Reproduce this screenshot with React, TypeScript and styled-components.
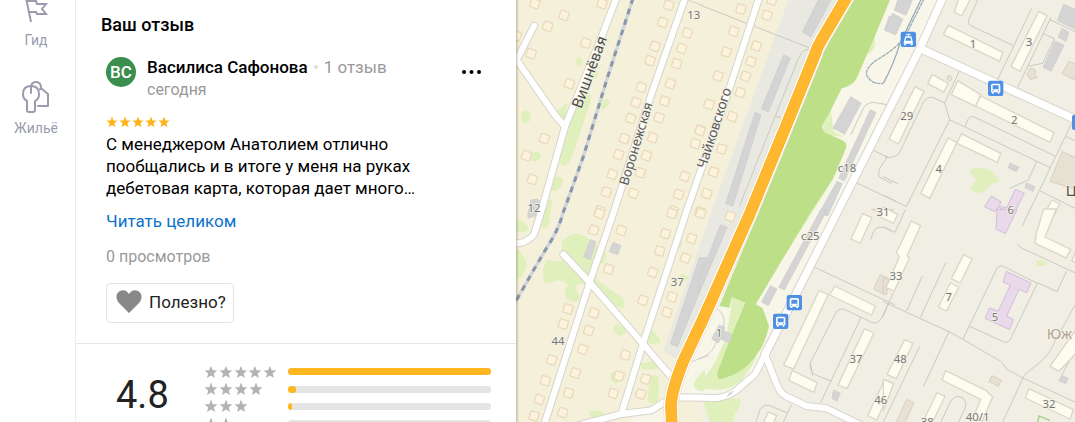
import React from "react";
import styled, { createGlobalStyle, css } from "styled-components";

const GlobalStyle = createGlobalStyle`
  * { box-sizing: border-box; }
  body {
    margin: 0;
    background: #fff;
    color: #000;
    font-family: Roboto, "Noto Sans", sans-serif;
    font-size: 17px;
    line-height: 22px;
  }
`;

const Shell = styled.div`
  display: flex;
  height: 100vh;
  overflow: hidden;
`;

const SideNav = styled.nav`
  flex: 0 0 76px;
  display: flex;
  flex-direction: column;
  gap: 31px;
  border-right: 1px solid #ededf0;
`;

const NavLink = styled.a`
  display: flex;
  flex-direction: column;
  align-items: center;
  gap: 5px;
  padding-right: 3px;
  color: #9a9cad;
  font-size: 14px;
  line-height: 18px;
  text-decoration: none;
`;

const Panel = styled.main`
  flex: 0 0 440px;
  background: #fff;
`;

const ReviewSection = styled.section`
  padding: 14px 30px 20px;
  border-bottom: 1px solid #e6e6e6;
`;

const SectionTitle = styled.h2`
  margin: 0 0 20px -5px;
  font-size: 18px;
  line-height: 22px;
  font-weight: 500;
`;

const AuthorRow = styled.header`
  display: flex;
  gap: 11px;
`;

const Avatar = styled.div`
  display: flex;
  align-items: center;
  justify-content: center;
  width: 30px;
  height: 30px;
  margin-top: 1px;
  border-radius: 50%;
  background: #3a8e4e;
  color: #fff;
  font-size: 17px;
  font-weight: 500;
`;

const AuthorInfo = styled.div`
  flex: 1;
`;

const AuthorLine = styled.div`
  display: flex;
  align-items: center;
  gap: 6px;
`;

const AuthorName = styled.span`
  font-weight: 500;
`;

const Dot = styled.span`
  width: 4px;
  height: 4px;
  border-radius: 50%;
  background: #dedede;
`;

const Muted = styled.span<{ $small?: boolean }>`
  color: #999;
  ${(p) => p.$small && css`font-size: 16px;`}
`;

const MenuButton = styled.button`
  display: flex;
  align-items: center;
  width: 25px;
  height: 32px;
  padding: 0;
  border: 0;
  background: none;
`;

const Stars = styled.div<{ $tone: "gold" | "grey" }>`
  display: flex;
  align-items: center;
  gap: 1px;
  color: ${(p) => (p.$tone === "gold" ? "#ffb31a" : "#b3b3b3")};
`;

const ReviewStars = styled(Stars)`
  margin: 15px 0 5px;
`;

const ReviewText = styled.p`
  max-width: 330px;
  margin: 0 0 11px;
`;

const ReadMore = styled.a`
  display: block;
  color: #0b73cc;
  text-decoration: none;
`;

const Views = styled.div`
  margin: 14px 0 15px;
  color: #999;
  font-size: 16px;
`;

const UsefulButton = styled.button`
  display: flex;
  align-items: center;
  gap: 7px;
  height: 40px;
  padding: 0 7px 2px 9px;
  border: 1px solid #e3e3e3;
  border-radius: 4px;
  background: #fff;
  color: #222;
  font: inherit;
`;

const RatingSection = styled.section`
  display: flex;
  padding: 19px 25px 20px 40px;
`;

const Score = styled.div`
  flex: 0 0 88px;
  padding-top: 7px;
  color: #222;
  font-size: 38px;
  line-height: 50px;
`;

const Distribution = styled.div`
  flex: 1;
  display: grid;
  grid-template-rows: repeat(5, 1fr);
  height: 87px;
`;

const DistributionRow = styled.div`
  display: grid;
  grid-template-columns: 73px 1fr;
  gap: 11px;
  align-items: center;
`;

const Track = styled.div`
  height: 7px;
  border-radius: 3px;
  background: #e5e5e5;
  overflow: hidden;
`;

const Fill = styled.div`
  height: 100%;
  border-radius: 3px;
  background: #ffb61f;
`;

const MapArea = styled.section`
  position: relative;
  flex: 1;
  min-width: 0;
  background: #f1efe3;

  svg {
    display: block;
    width: 100%;
    height: 100%;
  }

  &::before {
    content: "";
    position: absolute;
    inset: 0 auto 0 0;
    width: 3px;
    background: linear-gradient(to right, rgba(70, 60, 20, 0.28), rgba(70, 60, 20, 0));
  }
`;

const Star = ({ size }: { size: number }) => (
  <svg width={size} height={size} viewBox="0 0 24 24" fill="currentColor" aria-hidden="true">
    <path d="M12 1l3 7.800 8 .4-6.200 5.200 2.100 8L12 18l-6.900 4.400 2.100-8L1 9.200l8-.4z" />
  </svg>
);

const StarRow = ({ count, size }: { count: number; size: number }) => (
  <>
    {Array.from({ length: count }, (_, i) => (
      <Star key={i} size={size} />
    ))}
  </>
);

type Points = string[];

interface District {
  x: number;
  y: number;
  houses?: [number, number][];
  grey?: Points;
  blocks?: Points;
  beige?: Points;
  schools?: Points;
  paths?: string[];
  labels?: [number, number, string][];
}

const districts: District[] = [
  {
    x: 0, y: 0,
    houses: [[60,11],[147,46],[98,79],[4,108],[48,161],[261,11],[212,129],[163,251],[88,416],[34,467],[52,538],[461,16],[443,67],[420,139],[405,182],[379,262],[363,307],[347,355],[328,416],[311,464],[292,523],[274,576],[255,633],[517,99],[500,145],[485,191],[466,251],[449,303],[432,353],[413,413],[394,467],[376,518],[355,580],[555,390],[541,431],[509,529],[491,583],[475,633]],
    grey: ["48,600 68,597 78,610 70,645 40,655 38,645"],
    labels: [[536,56,"13"],[57,636,"12"]],
  },
  {
    x: 555, y: 0,
    houses: [[123,27],[216,0],[201,46],[101,94],[79,156],[54,228],[27,313],[0,392],[169,138],[153,184],[137,229],[121,277],[97,350],[65,447],[41,516],[20,581]],
    grey: ["359,-8 397,-8 333,111 307,96","251,165 271,174 205,336 184,326","165,337 183,344 99,618 77,611","452,290 484,309 434,403 399,384","511,329 528,337 433,543 416,535","411,544 427,551 383,648 357,640","568,48 585,55 585,100 553,90"],
    paths: ["M0 15 L337 147 L315 150 Q302 156 294 178 L225 350 L118 620","M225 347 L251 357","M452 405 L489 327 Q497 309 520 307 L562 314","M517 450 L570 474","M467 547 L590 606","M560 475 Q530 510 537 530 L575 550"],
    labels: [[441,516,"с18"]],
  },
  {
    x: 1110, y: 0,
    grey: ["40,-5 84,-5 63,46 28,31","23,40 54,57 32,105 0,91","531,85 552,96 543,124 519,112","509,123 537,135 499,214 474,202","536,12 575,30 575,90 517,62","375,489 402,502 394,515 370,504","424,549 450,560 444,574 420,563"],
    blocks: ["222,-6 258,-6 230,48 208,36","190,76 354,157 344,184 175,103","461,34 486,47 405,214 378,199","142,223 190,250 176,276 128,250","218,242 287,284 272,319 199,284","287,288 507,398 495,427 272,318","90,260 117,274 40,432 12,417","189,414 216,428 134,595 107,580","229,401 348,460 337,487 216,430","500,600 524,612 505,650 480,640"],
    beige: ["552,184 585,196 585,248 531,221","531,455 580,475 580,570 495,545","437,203 452,210 450,224 456,233 435,238 426,224","187,229 195,226 202,234 196,243 187,240"],
    schools: ["319,588 348,605 343,618 365,623 391,568 418,579 382,650 354,640 358,630 340,622 330,635 298,620"],
    paths: ["M280 -5 L251 60 Q248 73 260 78 L385 137","M335 245 L440 25","M397 265 L498 52","M475 101 L508 116 L473 190 L430 198","M493 58 L585 102","M223 213 L179 309 L194 359 L64 620","M179 309 L145 293 Q125 289 115 307 L45 455 Q33 476 0 472","M194 359 L498 504","M239 381 L250 356 Q256 346 270 352 L512 469","M455 485 L430 540 L374 565","M560 370 L430 640","M543 410 L580 426","M-5 530 L40 552","M-5 585 L64 620","M464 572 L570 625"],
    labels: [[264,143,"1"],[432,137,"3"],[65,360,"29"],[388,371,"2"],[161,519,"4"],[377,642,"6"]],
  },
  {
    x: 0, y: 633,
    houses: [[253,7],[236,57],[319,58],[281,174],[159,294],[145,339],[237,306],[221,359],[203,415],[110,447],[181,486],[91,509],[161,546],[73,565],[57,615],[143,605],[471,7],[555,3],[451,68],[434,120],[413,184],[384,268],[530,83],[511,141],[471,258],[456,304],[331,432],[312,495],[295,547],[392,504],[377,549]],
    grey: ["226,86 243,92 226,146 206,138","294,94 318,103 308,131 283,122","553,140 580,140 580,180 487,407 466,399"],
    labels: [[487,224,"37"],[129,403,"44"]],
  },
  {
    x: 555, y: 633,
    houses: [[91,16],[2,7]],
    grey: ["362,-4 382,-4 253,237 236,229","211,224 231,234 205,284 185,273","57,342 74,348 72,359 96,370 90,396 62,384 55,396 35,384","61,41 82,49 -3,245 -3,210","400,537 421,546 411,571 396,562"],
    blocks: ["488,8 516,20 480,97 453,84","404,225 526,285 515,312 389,252","357,239 385,250 281,474 251,463","277,478 351,515 342,544 266,508","493,353 522,366 441,533 414,522","554,506 580,518 530,627 503,614","205,603 230,614 214,650 188,640","515,-5 580,-5 572,18"],
    beige: ["540,191 573,205 556,252 521,234"],
    paths: ["M340 167 L585 282","M362 575 L484 318","M338 495 L331 455 L405 310 Q414 292 432 294 L515 334 Q530 341 544 323 L580 245","M331 455 Q327 485 350 493 L392 510","M512 86 L519 65 Q528 45 550 49 L575 60","M165 640 L180 596 Q190 580 207 583 L262 606","M275 580 L247 640","M380 606 L388 590"],
    labels: [[331,87,"с25"],[57,379,"1"],[468,457,"37"],[542,579,"46"]],
  },
  {
    x: 1110, y: 633,
    grey: ["531,493 550,503 542,518 521,509"],
    blocks: ["-5,-12 38,10 26,37 -20,15","79,30 107,44 66,134 73,142 28,240 3,230 43,137 34,126","236,131 261,144 226,216 199,203","196,216 221,228 185,300 160,288","476,-6 514,-6 480,78 557,115 544,141 450,97 454,68","59,386 84,397 34,503 6,490","-5,505 26,518 -5,600","182,479 302,538 323,558 285,646 254,646 287,565 171,507","156,545 180,556 137,645 108,645","432,533 565,596 555,624 421,561","570,360 580,360 580,420 522,481 495,466","573,118 580,120 580,158 560,150"],
    beige: ["321,494 349,507 340,526 312,512","65,565 87,575 54,648 27,648","-5,198 10,205 5,250 -5,250"],
    schools: ["336,-4 396,-4 361,68 333,54","364,181 438,216 425,245 402,235 365,315 385,326 374,356 300,322 313,291 340,300 376,222 354,213"],
    paths: ["M-5 47 L30 64 L61 -4","M-5 272 L192 362 L232 384 L345 450 Q350 452 365 475 L414 501 L580 578","M112 195 L65 300","M182 156 L106 319","M192 362 L115 527","M104 406 L-5 633","M12 275 L-5 315","M234 384 L332 180 Q340 162 353 165 L457 217 L376 385 Q370 397 355 392 L252 345","M397 98 Q405 112 425 118 L580 190","M545 180 L516 242 L457 215","M580 265 L510 390 Q500 420 470 450 L430 482 Q418 490 414 501 L350 640","M435 -5 L412 45","M530 493 L580 400","M165 640 L195 574 Q210 548 232 560 Q248 575 240 592 L218 640"],
    labels: [[33,206,"33"],[191,270,"7"],[330,330,"5"],[46,457,"48"],[492,591,"32"],[127,646,"38"],[278,630,"40/1"],[-6,16,"31"]],
  },
];

const roads = [
  "M57 78 L5 180 L120 345 L150 380",
  "M305 -8 L260 110 L150 380 L77 640 L57 703 Q53 712 25 727 L-10 732",
  "M511 -8 L410 280 L295 640 L228 835 L88 1272",
  "M733 -8 L645 260 L515 633 L385 1028 L320 1238",
  "M145 763 L225 848 L385 1033 L482 1146",
  "M190 1276 L315 1243 L410 1231 L465 1195 L490 1192 L605 1194 Q640 1190 665 1170 L720 1123 L750 1063",
  "M750 1063 L785 1153 Q795 1178 812 1188 L875 1218 L935 1225 L1040 1276",
];

const mainRoads = [
  "M1284 -8 L1215 145 L965 640 L835 898 L750 1063",
  "M1215 145 L1440 248 L1690 362",
];

const avenue = "M995 -8 L918 122 Q906 142 898 168 L810 385 L705 640 L565 955 L505 1083 Q468 1175 468 1220 L471 1280";

const railway = "M354 -5L275 240L205 470L142 645Q130 690 100 735L60 803L0 908";

const meadows = [
  "M195 270 Q225 260 228 300 L185 430 Q165 505 140 495 Q130 480 140 450 Z",
  "M120 335 L158 308 L152 350 L138 358 Z",
  "M184 175 Q200 167 204 185 Q202 200 187 197 Q178 188 184 175Z",
  "M230 205 Q252 210 251 226 L228 242Z",
  "M262 302 Q280 292 286 308 Q272 330 258 325Z",
  "M20 335 Q36 322 47 347 Q46 370 28 370 Q14 355 20 335Z",
  "M52 458 Q74 448 78 470 Q70 490 48 482Z",
  "M115 535 Q140 520 145 545 Q130 580 110 572Z",
  "M95 600 L112 598 Q105 650 100 680 Q85 695 78 675Z",
  "M3 655 Q35 665 42 690 Q15 700 3 692Z M3 745 Q35 770 35 800 Q20 838 3 840Z",
  "M140 725 Q175 685 215 713 L250 740 Q285 755 268 785 Q240 800 245 840 L310 885 Q340 905 325 925 Q300 925 245 865 Q205 840 178 860 Q205 895 185 905 Q145 905 150 870 L160 855 Q140 835 115 845 L90 850 Q75 815 95 780 L140 785Z",
  "M295 985 Q300 960 335 990 Q325 1020 300 1000Z",
  "M400 985 Q440 1010 435 1030 L400 1032Z",
  "M375 1090 Q410 1090 415 1070 Q450 1080 450 1100 Q400 1115 378 1105Z",
  "M288 1118 Q300 1110 314 1118 L310 1150 Q290 1150 285 1130Z",
  "M405 1130 Q430 1115 432 1145 L430 1205 Q405 1215 397 1200Z",
  "M222 1235 Q250 1225 275 1245 L230 1262Z",
  "M492 720 L502 728 L497 745 L485 740Z M495 825 Q515 820 520 835 Q505 850 495 840Z",
  "M650 891 L692 908 L645 1020 L610 1120 L730 1060 Q690 1150 640 1165 Q590 1175 550 1160 L550 1150 Q600 1100 612 1060 Q642 1010 650 891Z",
  "M570 1110 Q550 1120 535 1155 Q545 1180 570 1170Z",
  "M565 1203 L675 1195 Q680 1215 660 1240 L655 1270 L585 1270Z",
  "M1080 85 L1079 140 Q1070 160 1050 165Z M947 330 L956 393 L985 410 L940 406 Q915 395 925 375Z M958 530 L895 633 L800 780 L885 620Z",
  "M1368 508 Q1385 500 1420 507 Q1455 535 1452 545 Q1420 550 1408 575 Q1380 585 1368 565 Q1370 550 1388 540 Q1365 525 1364 513Z",
  "M1565 783 Q1575 775 1595 790 Q1588 805 1565 795Z",
];

const park =
  "M1018 -5 L1127 -5 L1077 115 L1025 235 Q1015 257 980 265 L945 335 L920 380 Q925 395 935 400 L985 422 Q997 430 993 445 L955 535 L885 640 L722 913 L743 925 L762 978 Q750 1035 725 1063 Q690 1120 615 1138 Q604 1135 608 1115 L645 1018 L691 908 L650 891 L643 923 L613 918 L730 640 L830 395 L912 180 L930 142 Z";

const MapPin = ({ x, y, tram }: { x: number; y: number; tram?: boolean }) => (
  <g transform={`translate(${x} ${y})`}>
    <rect x="-23" y="-23" width="46" height="46" rx="6" fill="#4e91e4" />
    {tram && <path d="M-7 -15H7M0 -15V-8" stroke="#fff" strokeWidth="3" />}
    <path
      fill="#fff"
      fillRule="evenodd"
      d={
        tram
          ? "M-9 -9H9L14 10V13H-14V10Z M-6 -5L-9 4H9L6 -5Z M-13 14H-7V18H-13Z M7 14H13V18H7Z"
          : "M-9 -14H9Q14 -14 14 -9V12H11V16H6V12H-6V16H-11V12H-14V-9Q-14 -14 -9 -14Z M-9 -9V3H9V-9Z M-10 6V9H-6V6Z M6 6V9H10V6Z"
      }
    />
  </g>
);

const MapText = styled.text<{ $size: number; $color?: string }>`
  font-family: "Noto Sans", sans-serif;
  font-size: ${(p) => p.$size}px;
  fill: ${(p) => p.$color ?? "#77777a"};
  stroke: #f6f3e6;
  stroke-width: 5px;
  stroke-linejoin: round;
  paint-order: stroke;
`;

const CityMap = () => (
  <svg viewBox="3 0 1677 1266" preserveAspectRatio="xMinYMin slice" role="img" aria-label="Карта">
    <rect width="1690" height="1276" fill="#f1efe3" />
    <path d="M0 0H830L585 640L445 1053L500 1085L480 1190L560 1195V1276H0Z" fill="#f5f0d9" />
    <path d="M1000 0H1280L750 1063L720 1125L655 1178L610 1194H480V1083Z" fill="#f8f6e8" />
    <path d="M350 1245L470 1205V1276H350Z" fill="#f8f6e8" />
    <path d="M820 0H1000L907 150L565 955L498 1085L445 1053L590 633Z" fill="#e9e8e1" />
    {meadows.map((d) => (
      <path key={d} d={d} fill="#dff0bd" />
    ))}
    <path d={park} fill="#bcdf87" />
    <g fill="none" stroke="#b4d980" strokeWidth="2" opacity=".6">
      <path d="M960 220Q995 245 950 270M1000 120Q1050 100 1060 50M820 460Q870 440 850 500M770 600Q830 560 850 620M700 750Q745 790 720 830M900 410Q950 420 930 480M660 1000Q700 1010 725 960" />
    </g>
    <g fill="none" stroke="#9badb8" strokeWidth="4">
      <path d="M1220 -5L1155 130Q1135 195 1105 250" />
      <path d="M1228 -5L1170 110Q1145 145 1085 180Q1050 205 1055 225Q1070 255 1105 250" strokeDasharray="12 2" />
    </g>
    <g fill="none" stroke="#d3d1c6" strokeWidth="3">
      <path d="M605 925Q635 945 625 980L600 1035Q585 1070 550 1075M530 1085L580 1067M517 0L560 15" />
    </g>
    {districts.map((t) => (
      <g key={`${t.x}-${t.y}`} transform={`translate(${t.x} ${t.y})`} strokeLinejoin="round">
        {t.paths?.map((d) => (
          <path key={d} d={d} fill="none" stroke="#c9cac3" strokeWidth="3" />
        ))}
        {t.grey?.map((p) => (
          <polygon key={p} points={p} fill="#d4d4d4" stroke="#cccccb" strokeWidth="2" />
        ))}
        {t.beige?.map((p) => (
          <polygon key={p} points={p} fill="#e6e1d3" stroke="#d8d1c0" strokeWidth="3" />
        ))}
        {t.blocks?.map((p) => (
          <polygon key={p} points={p} fill="#fefcef" stroke="#dbd6c7" strokeWidth="4" />
        ))}
        {t.schools?.map((p) => (
          <polygon key={p} points={p} fill="#e9d9eb" stroke="#d3bdda" strokeWidth="3" />
        ))}
        {t.houses?.map(([x, y]) => (
          <rect
            key={`${x}-${y}`}
            x="-13" y="-13" width="26" height="26" rx="3"
            transform={`translate(${x} ${y}) rotate(19)`}
            fill="#fdf3dd" stroke="#e8dabd" strokeWidth="4"
          />
        ))}
      </g>
    ))}
    <path d="M1567 1270L1572 1248L1605 1262" fill="none" stroke="#a3d18b" strokeWidth="4" />
    <g fill="none" strokeLinejoin="round" strokeLinecap="round">
      {roads.map((d) => (
        <path key={d} d={d} stroke="#d6d4cd" strokeWidth="24" />
      ))}
      {mainRoads.map((d) => (
        <path key={d} d={d} stroke="#d6d4cd" strokeWidth="28" />
      ))}
      {roads.map((d) => (
        <path key={d} d={d} stroke="#fff" strokeWidth="18" />
      ))}
      {mainRoads.map((d) => (
        <path key={d} d={d} stroke="#fff" strokeWidth="22" />
      ))}
      <path d={avenue} stroke="#e5e1d0" strokeWidth="47" />
      <path d={avenue} stroke="#fff" strokeWidth="43" />
      <path d={avenue} stroke="#f9ae2a" strokeWidth="35" />
      <path d={avenue} stroke="#ffb72f" strokeWidth="31" />
    </g>
    <path d={railway} fill="none" stroke="#d3d4d8" strokeWidth="10" />
    <path d={railway} fill="none" stroke="#8798ac" strokeWidth="9" strokeDasharray="17 16" />
    <path d="M635 1190L650 1180M640 1182L655 1174" stroke="#c6c7cc" strokeWidth="3" />
    {districts.map((t) =>
      t.labels?.map(([x, y, label]) => (
        <MapText key={`${t.x}-${x}-${y}`} x={t.x + x} y={t.y + y} textAnchor="middle" $size={34}>
          {label}
        </MapText>
      ))
    )}
    <MapText $size={45} $color="#4c4c4c" transform="translate(199 328) rotate(-70)">Вишнёвая</MapText>
    <MapText $size={40} $color="#5c5c5c" transform="translate(338 559) rotate(-73)">Воронежская</MapText>
    <MapText $size={41} $color="#5c5c5c" transform="translate(572 508) rotate(-72)">Чайковского</MapText>
    <MapText $size={44} $color="#55514a" x="1652" y="588">Ц</MapText>
    <MapText $size={44} $color="#b1a493" x="1595" y="1018">Юж</MapText>
    <MapPin x={1180} y={118} tram />
    <MapPin x={1442} y={265} />
    <MapPin x={1694} y={367} />
    <MapPin x={838} y={908} />
    <MapPin x={797} y={964} />
  </svg>
);

const distribution = [
  { stars: 5, share: 100 },
  { stars: 4, share: 4 },
  { stars: 3, share: 2 },
  { stars: 2, share: 0 },
  { stars: 1, share: 3 },
];

export default function App() {
  return (
    <>
      <GlobalStyle />
      <Shell>
        <SideNav>
          <NavLink href="#guide">
            <svg width="28" height="26" viewBox="0 0 28 26" fill="none" stroke="#9a9cad" strokeWidth="2" aria-hidden="true">
              <path d="M4 -2L9 22M4 1H14L15 4H24L20 9L24 14H15L14 12H7" />
            </svg>
            Гид
          </NavLink>
          <NavLink href="#housing">
            <svg width="28" height="34" viewBox="0 0 28 34" fill="none" stroke="#9a9cad" strokeWidth="2" strokeLinejoin="round" strokeLinecap="round" aria-hidden="true">
              <path d="M9 13V8C9 4 11 2 14 2S19 4 19 8" />
              <path d="M18 9H20L26 14V26H16" />
              <path d="M9 6C4 6 1 9 1 14C1 17 3 20 5 21V30Q5 32 7 32H11Q13 32 13 30V21C16 20 17 17 17 14C17 9 14 6 9 6Z" />
            </svg>
            Жильё
          </NavLink>
        </SideNav>
        <Panel>
          <ReviewSection>
            <SectionTitle>Ваш отзыв</SectionTitle>
            <article>
              <AuthorRow>
                <Avatar>ВС</Avatar>
                <AuthorInfo>
                  <AuthorLine>
                    <AuthorName>Василиса Сафонова</AuthorName>
                    <Dot />
                    <Muted>1 отзыв</Muted>
                  </AuthorLine>
                  <Muted $small>сегодня</Muted>
                </AuthorInfo>
                <MenuButton aria-label="Ещё">
                  <svg width="20" height="6" viewBox="0 0 20 6" aria-hidden="true">
                    <circle cx="3" cy="3" r="2" />
                    <circle cx="10.500" cy="3" r="2" />
                    <circle cx="18" cy="3" r="2" />
                  </svg>
                </MenuButton>
              </AuthorRow>
              <ReviewStars $tone="gold">
                <StarRow count={5} size={12} />
              </ReviewStars>
              <ReviewText>
                С менеджером Анатолием отлично пообщались и в итоге у меня на руках дебетовая карта, которая дает много…
              </ReviewText>
              <ReadMore href="#review">Читать целиком</ReadMore>
              <Views>0 просмотров</Views>
              <UsefulButton>
                <svg width="26" height="24" viewBox="0 0 26 24" fill="#888" aria-hidden="true">
                  <path d="M13 23L3 13C-1 8 0 3 4 1C8 -1 11 1 13 4C15 1 18 -1 22 1C26 3 27 8 23 13Z" />
                </svg>
                Полезно?
              </UsefulButton>
            </article>
          </ReviewSection>
          <RatingSection>
            <Score>4.8</Score>
            <Distribution>
              {distribution.map((row) => (
                <DistributionRow key={row.stars}>
                  <Stars $tone="grey">
                    <StarRow count={row.stars} size={14} />
                  </Stars>
                  <Track>
                    <Fill style={{ width: `${row.share}%` }} />
                  </Track>
                </DistributionRow>
              ))}
            </Distribution>
          </RatingSection>
        </Panel>
        <MapArea>
          <CityMap />
        </MapArea>
      </Shell>
    </>
  );
}
